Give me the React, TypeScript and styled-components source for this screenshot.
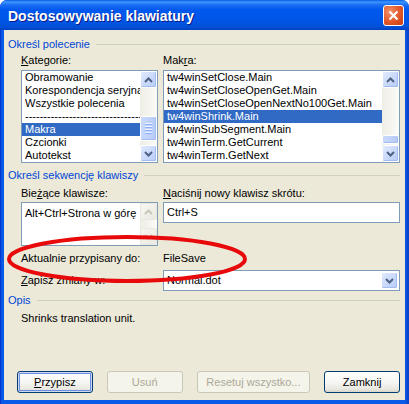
import React from "react";
import styled, { createGlobalStyle, css } from "styled-components";

const GlobalStyle = createGlobalStyle`
  html, body {
    margin: 0;
    padding: 0;
    background: #ffffff;
  }
  body {
    font-family: "Liberation Sans", Arial, sans-serif;
    font-size: 11px;
    color: #000;
  }
`;

const Window = styled.div`
  position: relative;
  width: 409px;
  height: 404px;
  display: flex;
  flex-direction: column;
  border-radius: 7px 7px 0 0;
  overflow: hidden;
  background: linear-gradient(to right, #0019cf 0, #0855dd 1px, #0a5ae8 3px, #0a5ae8 405px, #0845c9 408px);
`;

const TitleBar = styled.div`
  height: 30px;
  flex: none;
  display: flex;
  align-items: center;
  justify-content: space-between;
  padding: 0 5px 0 8px;
  background: linear-gradient(
    to bottom,
    #0a5ee8 0,
    #3d95ff 2px,
    #1a6cf2 5px,
    #0058ee 10px,
    #0055e5 22px,
    #0150d6 27px,
    #003fc2 30px
  );
`;

const Title = styled.span`
  font-family: "Liberation Sans", Arial, sans-serif;
  font-weight: bold;
  font-size: 14px;
  color: #fff;
  text-shadow: 1px 1px 0 #0a1883;
  margin-top: 1px;
`;

const CloseBtn = styled.div`
  width: 21px;
  height: 21px;
  box-sizing: border-box;
  border: 1px solid #fff;
  border-radius: 3px;
  background: radial-gradient(circle at 30% 30%, #f3916a 0, #e35a2c 50%, #c83c10 100%);
  display: flex;
  align-items: center;
  justify-content: center;
`;

const Client = styled.div`
  flex: 1;
  margin: 0 4px 4px 4px;
  background: #ece9d8;
  display: flex;
  flex-direction: column;
  padding: 7px 5px 7px 4px;
`;

const GroupHeader = styled.div<{ $mt?: number }>`
  display: flex;
  align-items: center;
  gap: 6px;
  height: 14px;
  margin-top: ${(p) => p.$mt ?? 0}px;
  color: #0046d5;
  &::after {
    content: "";
    flex: 1;
    height: 1px;
    background: #d0d0bf;
  }
`;

const GroupBody = styled.div`
  padding-left: 13px;
  padding-right: 1px;
`;

const Pair = styled.div<{ $mt: number; $align?: string }>`
  display: grid;
  grid-template-columns: 137px 237px;
  column-gap: 5px;
  margin-top: ${(p) => p.$mt}px;
  align-items: ${(p) => p.$align ?? "start"};
`;

const Label = styled.div`
  line-height: 13px;
  white-space: nowrap;
`;

const ListBox = styled.div<{ $h: number }>`
  height: ${(p) => p.$h}px;
  box-sizing: border-box;
  border: 1px solid #7f9db9;
  background: #fff;
  display: flex;
  overflow: hidden;
`;

const Items = styled.div`
  flex: 1;
  min-width: 0;
  overflow: hidden;
`;

const Item = styled.div<{ $selected?: boolean; $mt?: number }>`
  height: 13px;
  line-height: 13px;
  padding-left: 3px;
  margin-top: ${(p) => p.$mt ?? 0}px;
  white-space: nowrap;
  overflow: hidden;
  ${(p) =>
    p.$selected &&
    css`
      background: #316ac5;
      color: #fff;
    `}
`;

const ScrollBar = styled.div`
  width: 17px;
  flex: none;
  display: flex;
  flex-direction: column;
  background: linear-gradient(to right, #eeede5, #fbfbf8);
`;

const ScrollBtn = styled.div<{ $disabled?: boolean }>`
  width: 17px;
  height: 17px;
  box-sizing: border-box;
  flex: none;
  border: 1px solid ${(p) => (p.$disabled ? "#e8e8df" : "#ffffff")};
  border-radius: 2px;
  background: ${(p) =>
    p.$disabled
      ? "linear-gradient(135deg, #f7f7f2, #eae9e0)"
      : "linear-gradient(135deg, #e1eafe, #b6cbf7)"};
  box-shadow: ${(p) => (p.$disabled ? "none" : "inset -1px -1px 0 #a4bdf0")};
  display: flex;
  align-items: center;
  justify-content: center;
`;

const Track = styled.div`
  flex: 1;
`;

const Thumb = styled.div<{ $top: number; $h: number }>`
  margin-top: ${(p) => p.$top}px;
  height: ${(p) => p.$h}px;
  box-sizing: border-box;
  border: 1px solid #fff;
  border-radius: 2px;
  background: linear-gradient(to right, #c9d8fc, #b7cbf8);
  box-shadow: inset -1px -1px 0 #a4bdf0;
  display: flex;
  flex-direction: column;
  align-items: center;
  justify-content: center;
  gap: 1px;
`;

const Grip = styled.div`
  width: 7px;
  height: 1px;
  background: #eef4fe;
  border-bottom: 1px solid #8cb0f8;
`;

const TextBox = styled.div`
  height: 21px;
  box-sizing: border-box;
  border: 1px solid #7f9db9;
  background: #fff;
  line-height: 19px;
  padding-left: 3px;
`;

const Combo = styled.div`
  height: 21px;
  box-sizing: border-box;
  border: 1px solid #7f9db9;
  background: #fff;
  display: flex;
  align-items: center;
  padding: 1px;
`;

const ComboText = styled.div`
  flex: 1;
  padding-left: 2px;
  line-height: 17px;
`;

const Value = styled.div`
  line-height: 13px;
`;

const Description = styled.div`
  margin-top: 5px;
  padding-left: 13px;
  line-height: 13px;
`;

const Buttons = styled.div`
  margin-top: auto;
  display: flex;
  gap: 14px;
  padding-left: 9px;
`;

const Button = styled.div<{ $w: number; $default?: boolean; $disabled?: boolean }>`
  width: ${(p) => p.$w}px;
  height: 22px;
  box-sizing: border-box;
  border: 1px solid #003c74;
  border-radius: 3px;
  background: linear-gradient(to bottom, #ffffff 0%, #f6f6f3 50%, #e9e8e1 85%, #d8d5c9 100%);
  display: flex;
  align-items: center;
  justify-content: center;
  ${(p) =>
    p.$default &&
    css`
      box-shadow: inset 0 0 0 1px #ced9f0, inset 0 0 0 2px #6d8fe0;
    `}
  ${(p) =>
    p.$disabled &&
    css`
      border-color: #c9c7ba;
      background: #f5f4ea;
      color: #aca899;
    `}
`;

const U = styled.span`
  text-decoration: underline;
`;

const Annotation = styled.svg`
  position: absolute;
  left: 5px;
  top: 233px;
  pointer-events: none;
`;

const Arrow = ({ up, disabled }: { up?: boolean; disabled?: boolean }) => (
  <svg width="9" height="6" viewBox="0 0 9 6">
    <path
      d={up ? "M1 5 L4.5 1.5 L8 5" : "M1 1 L4.5 4.5 L8 1"}
      fill="none"
      stroke={disabled ? "#c9c7ba" : "#4d6185"}
      strokeWidth="2"
    />
  </svg>
);

function Scroll({ thumb, disabled }: { thumb?: { top: number; h: number }; disabled?: boolean }) {
  return (
    <ScrollBar>
      <ScrollBtn $disabled={disabled}>
        <Arrow up disabled={disabled} />
      </ScrollBtn>
      <Track>
        {thumb && (
          <Thumb $top={thumb.top} $h={thumb.h}>
            {thumb.h > 14 && (
              <>
                <Grip />
                <Grip />
                <Grip />
                <Grip />
              </>
            )}
          </Thumb>
        )}
      </Track>
      <ScrollBtn $disabled={disabled}>
        <Arrow disabled={disabled} />
      </ScrollBtn>
    </ScrollBar>
  );
}

const categories = [
  "Obramowanie",
  "Korespondencja seryjna",
  "Wszystkie polecenia",
  "------------------------------------------",
  "Makra",
  "Czcionki",
  "Autotekst",
];

const macros = [
  "tw4winSetClose.Main",
  "tw4winSetCloseOpenGet.Main",
  "tw4winSetCloseOpenNextNo100Get.Main",
  "tw4winShrink.Main",
  "tw4winSubSegment.Main",
  "tw4winTerm.GetCurrent",
  "tw4winTerm.GetNext",
];

export default function App() {
  return (
    <>
      <GlobalStyle />
      <Window>
        <TitleBar>
          <Title>Dostosowywanie klawiatury</Title>
          <CloseBtn>
            <svg width="11" height="11" viewBox="0 0 11 11">
              <path d="M1.5 1.5 L9.5 9.5 M9.5 1.5 L1.5 9.5" stroke="#fff" strokeWidth="2.2" />
            </svg>
          </CloseBtn>
        </TitleBar>
        <Client>
          <GroupHeader>Określ polecenie</GroupHeader>
          <GroupBody>
            <Pair $mt={3}>
              <Label>
                <U>K</U>ategorie:
              </Label>
              <Label>
                Mak<U>r</U>a:
              </Label>
            </Pair>
            <Pair $mt={3}>
              <ListBox $h={93}>
                <Items>
                  {categories.map((c) => (
                    <Item key={c} $selected={c === "Makra"}>
                      {c}
                    </Item>
                  ))}
                </Items>
                <Scroll thumb={{ top: 28, h: 25 }} />
              </ListBox>
              <ListBox $h={93}>
                <Items>
                  {macros.map((m) => (
                    <Item key={m} $selected={m === "tw4winShrink.Main"}>
                      {m}
                    </Item>
                  ))}
                </Items>
                <Scroll thumb={{ top: 47, h: 9 }} />
              </ListBox>
            </Pair>
          </GroupBody>

          <GroupHeader $mt={5}>Określ sekwencję klawiszy</GroupHeader>
          <GroupBody>
            <Pair $mt={5}>
              <Label>
                Bie<U>ż</U>ące klawisze:
              </Label>
              <Label>
                <U>N</U>aciśnij nowy klawisz skrótu:
              </Label>
            </Pair>
            <Pair $mt={2}>
              <ListBox $h={44}>
                <Items>
                  <Item $mt={4}>Alt+Ctrl+Strona w górę</Item>
                </Items>
                <Scroll disabled />
              </ListBox>
              <TextBox>Ctrl+S</TextBox>
            </Pair>
            <Pair $mt={6}>
              <Label>Aktualnie przypisany do:</Label>
              <Value>FileSave</Value>
            </Pair>
            <Pair $mt={5} $align="center">
              <Label>
                <U>Z</U>apisz zmiany w:
              </Label>
              <Combo>
                <ComboText>Normal.dot</ComboText>
                <ScrollBtn>
                  <Arrow />
                </ScrollBtn>
              </Combo>
            </Pair>
          </GroupBody>

          <GroupHeader $mt={2}>Opis</GroupHeader>
          <Description>Shrinks translation unit.</Description>

          <Buttons>
            <Button $w={76} $default>
              <span>
                <U>P</U>rzypisz
              </span>
            </Button>
            <Button $w={76} $disabled>
              Usuń
            </Button>
            <Button $w={114} $disabled>
              Resetuj wszystko...
            </Button>
            <Button $w={76}>Zamknij</Button>
          </Buttons>
        </Client>
        <Annotation width="246" height="54" viewBox="0 0 246 54">
          <ellipse cx="122" cy="26" rx="118" ry="22" fill="none" stroke="#e80a0a" strokeWidth="4" />
        </Annotation>
      </Window>
    </>
  );
}
